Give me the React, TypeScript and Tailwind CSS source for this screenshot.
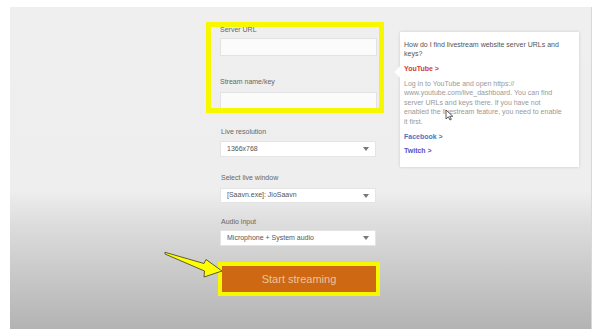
import React from "react";

const font = { fontFamily: '"Liberation Sans", Arial, sans-serif' };

const Label = ({ text, className }: { text: string; className: string }) => (
  <div className={`text-[7px] leading-[8px] text-[#666] ${className}`}>{text}</div>
);

const Select = ({ value, className }: { value: string; className: string }) => (
  <div
    className={`flex items-center justify-between w-[156px] bg-white border border-[#e4e4e4] pl-[6px] pr-[6px] text-[7px] text-[#555] ${className}`}
  >
    <span>{value}</span>
    <svg width="6" height="4" viewBox="0 0 6 4">
      <path d="M0 0 L6 0 L3 4 Z" fill="#777" />
    </svg>
  </div>
);

export default function App() {
  return (
    <div className="relative w-[600px] h-[333px] bg-white pl-[10px] pt-[7px] pr-[8px] pb-[4px]" style={font}>
      <div className="h-full flex pl-[196px] pt-[15px] border-r border-[#d8d8d8] bg-[linear-gradient(to_bottom,#efefef_0%,#eeeeee_57%,#dcdcdc_68%,#b3b3b3_100%)]">
        {/* Form column */}
        <div className="w-[178px] flex flex-col">
          <div className="h-[91px] border-[5px] border-[#f7f700] pl-[9px] pr-[2px] overflow-hidden">
            <Label text="Server URL" className="h-[12px] -mt-px" />
            <div className="w-[157px] h-[18px] bg-[#fbfbfb] border border-[#e2e2e2]" />
            <Label text="Stream name/key" className="mt-[22px] h-[14px]" />
            <div className="w-[157px] h-[18px] bg-[#fbfbfb] border border-[#e2e2e2]" />
          </div>

          <div className="pl-[14px]">
            <Label text="Live resolution" className="mt-[15px] h-[13px] pl-px" />
            <Select value="1366x768" className="h-[16px]" />
            <Label text="Select live window" className="mt-[17px] h-[14px] pl-px" />
            <Select value="[Saavn.exe]: JioSaavn" className="h-[15px]" />
            <Label text="Audio input" className="mt-[15px] h-[12px] pl-px" />
            <Select value="Microphone + System audio" className="h-[16px]" />
          </div>

          <div className="mt-[16px] ml-[12px] w-[162px] h-[34px] border-[4px] border-[#f7f700] bg-[#cf6812] flex items-center justify-center text-[11px] text-[#e9c59b]">
            Start streaming
          </div>
        </div>

        {/* Help tooltip */}
        <div className="relative ml-[16px] mt-[10px] w-[179px] h-[135px] bg-white shadow-[0_0_3px_rgba(0,0,0,0.15)] pl-[4px] pr-[6px] pt-[9px] text-[7px] leading-[9px]">
          <div className="absolute left-[-4px] top-[36px] w-[8px] h-[8px] bg-white rotate-45" />
          <div className="relative text-[#555] leading-[8.5px]">
            How do I find livestream website server URLs and keys?
          </div>
          <div className="mt-[6px] font-bold text-[#d23a32]">YouTube &gt;</div>
          <div className="mt-[6px] text-[#999] leading-[9.4px] whitespace-nowrap">
            Log in to YouTube and open https://
            <br />
            www.youtube.com/live_dashboard. You can find
            <br />
            server URLs and keys there. If you have not
            <br />
            enabled the livestream feature, you need to enable
            <br />
            it first.
          </div>
          <div className="mt-[6px] font-bold text-[#4f72c4]">Facebook &gt;</div>
          <div className="mt-[5px] font-bold text-[#5b4fc6]">Twitch &gt;</div>
        </div>
      </div>

      {/* Mouse cursor */}
      <svg className="absolute left-[445px] top-[109px]" width="9" height="12" viewBox="0 0 9 12">
        <path d="M1 1 L1 10 L3.3 7.8 L5 11 L6.3 10.4 L4.7 7.3 L7.8 7.3 Z" fill="#fff" stroke="#333" strokeWidth="0.8" />
      </svg>

      {/* Yellow arrow */}
      <svg className="absolute left-0 top-0 pointer-events-none" width="600" height="333">
        <polygon
          points="165,252.3 204,263.5 206,259.5 222,271 204,277 204.5,271 165,254"
          fill="#ffff00"
          stroke="#3a3a2a"
          strokeWidth="0.8"
          strokeLinejoin="round"
        />
      </svg>
    </div>
  );
}
